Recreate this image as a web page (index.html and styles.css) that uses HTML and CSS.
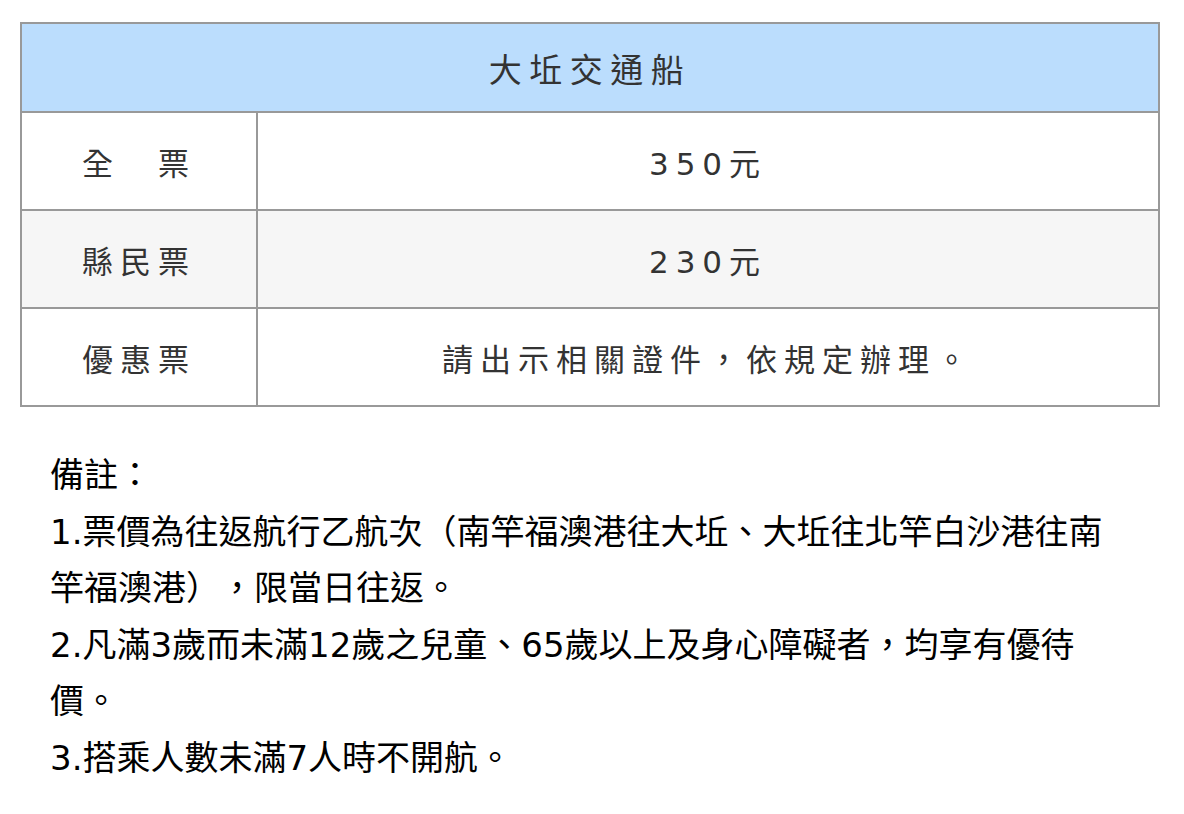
FILE: index.html
```html
<!DOCTYPE html>
<html lang="zh-Hant">
<head>
<meta charset="utf-8">
<title>大坵交通船</title>
<link rel="stylesheet" href="styles.css">
</head>
<body>
<div class="page">
  <table class="fare">
    <colgroup>
      <col class="col-label">
      <col class="col-value">
    </colgroup>
    <thead>
      <tr class="head-row"><th colspan="2">大坵交通船</th></tr>
    </thead>
    <tbody>
      <tr class="row"><td class="label">全　票</td><td class="value">350元</td></tr>
      <tr class="row alt"><td class="label">縣民票</td><td class="value">230元</td></tr>
      <tr class="row"><td class="label">優惠票</td><td class="value">請出示相關證件，依規定辦理。</td></tr>
    </tbody>
  </table>
  <div class="notes">
    <p>備註：</p>
    <p>1.票價為往返航行乙航次（南竿福澳港往大坵、大坵往北竿白沙港往南竿福澳港），限當日往返。</p>
    <p>2.凡滿3歲而未滿12歲之兒童、65歲以上及身心障礙者，均享有優待價。</p>
    <p>3.搭乘人數未滿7人時不開航。</p>
  </div>
</div>
</body>
</html>
```
FILE: styles.css
```css
html, body {
  margin: 0;
  padding: 0;
  background: #ffffff;
}
body {
  font-family: "DejaVu Sans", "Noto Sans CJK TC", sans-serif;
  text-spacing-trim: space-all;
}
.page {
  padding: 22px 24px 0 20px;
}
.fare {
  width: 1140px;
  border-collapse: collapse;
  table-layout: fixed;
  color: #333333;
}
.col-label {
  width: 236px;
}
.fare th,
.fare td {
  border: 2px solid #999999;
  text-align: center;
  vertical-align: middle;
  padding: 0;
  font-weight: 400;
}
.head-row {
  height: 89px;
  background: #bbddfd;
}
.head-row th {
  font-size: 33px;
  letter-spacing: 7.5px;
}
.row {
  height: 98px;
  background: #ffffff;
}
.row.alt {
  background: #f6f6f6;
}
.row td {
  font-size: 31px;
  letter-spacing: 7px;
}
.notes {
  padding: 40px 30px 0 30px;
  width: 1080px;
  color: #000000;
  font-size: 34px;
  line-height: 56.5px;
}
.notes p {
  margin: 0;
}
```
